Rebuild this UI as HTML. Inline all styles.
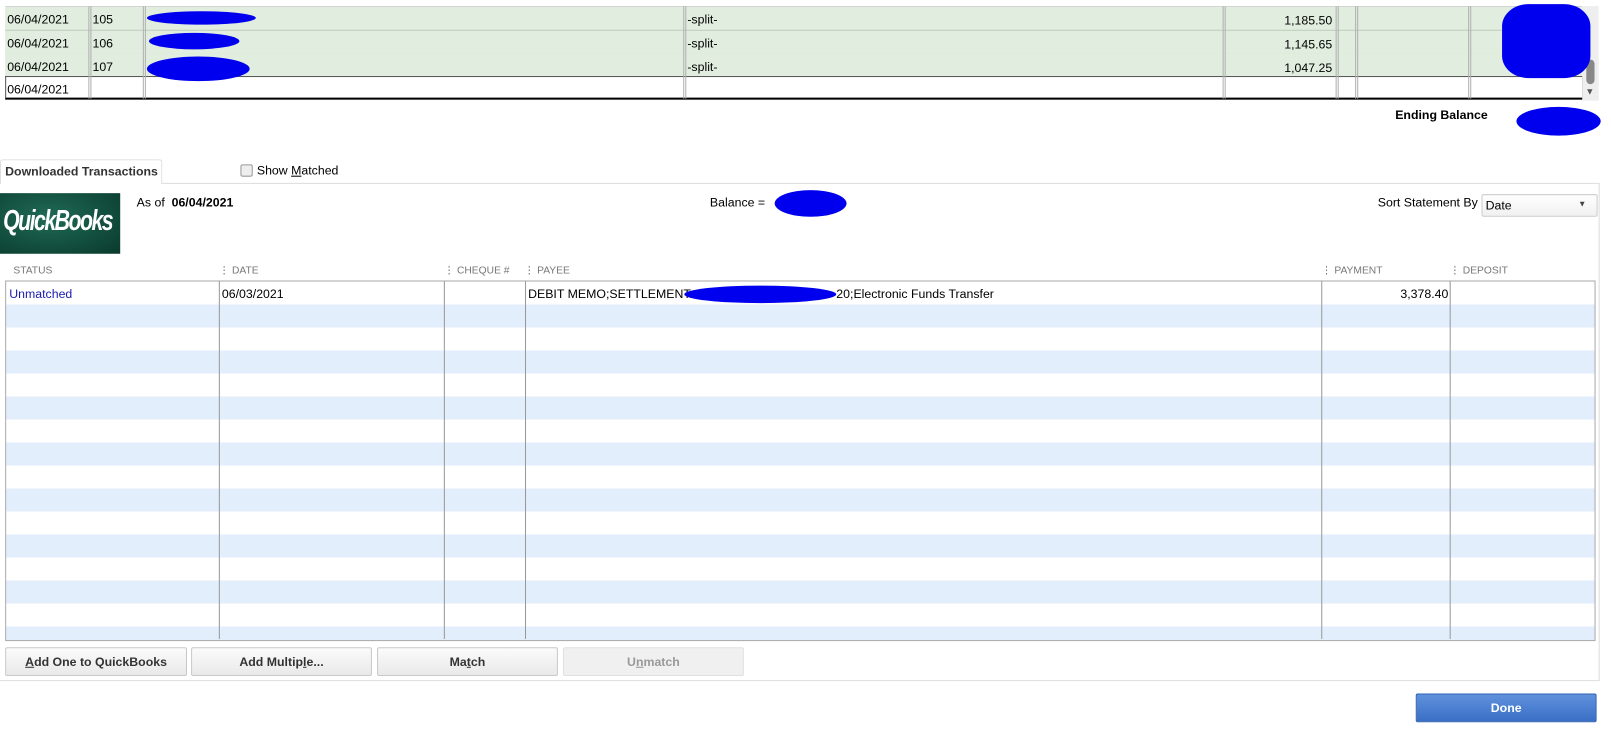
<!DOCTYPE html>
<html><head><style>
body{margin:0;width:1611px;height:729px;background:#fff;font-family:"Liberation Sans",Arial,sans-serif;font-size:12px;color:#000;position:relative;overflow:hidden}
#w{position:absolute;left:0;top:0;width:1568px;height:710px;transform:scale(1.0274);transform-origin:0 0}
.a{position:absolute}
.tr{position:absolute;left:5px;width:1535px;height:22px;background:#e1eedf;border-bottom:1px solid #b8c8b6}
.vl{position:absolute;width:1px;background:#b0b0b0}
.t{position:absolute;white-space:nowrap}
.hd{position:absolute;top:258px;font-size:10px;color:#777}
.btn{position:absolute;top:630px;height:26px;border:1px solid #c8c8c8;border-radius:2px;background:linear-gradient(#fbfbfb,#e9e9e9);font-weight:bold;font-size:12px;color:#333;text-align:center;line-height:26px}
.blob{position:absolute;background:#0000ee;border-radius:50%}
</style></head><body><div id="w">
<div class="a" style="left:5px;top:6px;width:1535px;height:90px;border-top:1px solid #ccc"></div>
<div class="tr" style="top:7px"></div>
<div class="tr" style="top:30px"></div>
<div class="tr" style="top:52px"></div>
<div class="a" style="left:5px;top:74px;width:1534px;height:20px;border:1px solid #555;border-bottom:2px solid #000;background:#fff"></div>
<div class="vl" style="left:86px;top:6px;height:90px"></div><div class="vl" style="left:88px;top:6px;height:90px"></div>
<div class="vl" style="left:139px;top:6px;height:90px"></div><div class="vl" style="left:141px;top:6px;height:90px"></div>
<div class="vl" style="left:665px;top:6px;height:90px"></div><div class="vl" style="left:667px;top:6px;height:90px"></div>
<div class="vl" style="left:1190px;top:6px;height:90px"></div><div class="vl" style="left:1192px;top:6px;height:90px"></div>
<div class="vl" style="left:1300px;top:6px;height:90px"></div><div class="vl" style="left:1302px;top:6px;height:90px"></div>
<div class="vl" style="left:1319px;top:6px;height:90px"></div><div class="vl" style="left:1321px;top:6px;height:90px"></div>
<div class="vl" style="left:1429px;top:6px;height:90px"></div><div class="vl" style="left:1431px;top:6px;height:90px"></div>
<div class="t" style="left:7px;top:12px">06/04/2021</div><div class="t" style="left:90px;top:12px">105</div><div class="t" style="left:669px;top:12px">-split-</div><div class="t" style="left:1250px;top:13px">1,185.50</div>
<div class="t" style="left:7px;top:35px">06/04/2021</div><div class="t" style="left:90px;top:35px">106</div><div class="t" style="left:669px;top:35px">-split-</div><div class="t" style="left:1250px;top:36px">1,145.65</div>
<div class="t" style="left:7px;top:58px">06/04/2021</div><div class="t" style="left:90px;top:58px">107</div><div class="t" style="left:669px;top:58px">-split-</div><div class="t" style="left:1250px;top:59px">1,047.25</div>
<div class="t" style="left:7px;top:80px">06/04/2021</div>
<div class="a" style="left:1540px;top:6px;width:16px;height:92px;background:#eee"></div>
<div class="a" style="left:1544px;top:58px;width:8px;height:24px;background:#888;border-radius:4px"></div>
<div class="t" style="left:1543px;top:84px;font-size:9px;color:#555">▼</div>
<div class="blob" style="left:143px;top:11px;width:106px;height:13px"></div>
<div class="blob" style="left:145px;top:32px;width:88px;height:16px"></div>
<div class="blob" style="left:143px;top:55px;width:100px;height:24px"></div>
<div class="blob" style="left:1462px;top:4px;width:86px;height:72px;border-radius:30%"></div>
<div class="t" style="left:1358px;top:105px;font-weight:bold">Ending Balance</div>
<div class="blob" style="left:1476px;top:104px;width:82px;height:28px"></div>
<div class="a" style="left:0;top:155px;width:156px;height:23px;border:1px solid #ddd;border-bottom:none;border-radius:3px 3px 0 0;background:#fff"></div>
<div class="t" style="left:5px;top:160px;font-weight:bold;color:#333">Downloaded Transactions</div>
<div class="a" style="left:157px;top:178px;width:1399px;height:1px;background:#ddd"></div>
<div class="a" style="left:1556px;top:178px;width:1px;height:484px;background:#ddd"></div>
<div class="a" style="left:234px;top:160px;width:10px;height:10px;border:1px solid #999;border-radius:2px;background:#eee"></div>
<div class="t" style="left:250px;top:159px">Show <u>M</u>atched</div>
<div class="a" style="left:0;top:188px;width:117px;height:59px;background:radial-gradient(ellipse at 40% 40%,#1f6a55,#0a3a2c);overflow:hidden"></div>
<div class="t" style="left:3px;top:199px;font-size:28px;font-weight:bold;color:#fff;letter-spacing:-2px;transform:scaleX(0.74);transform-origin:left;font-style:italic">QuickBooks</div>
<div class="t" style="left:133px;top:190px">As of &nbsp;<b>06/04/2021</b></div>
<div class="t" style="left:691px;top:190px">Balance =</div>
<div class="blob" style="left:754px;top:185px;width:70px;height:26px"></div>
<div class="t" style="left:1341px;top:190px">Sort Statement By</div>
<div class="a" style="left:1442px;top:189px;width:111px;height:20px;border:1px solid #ccc;border-radius:2px;background:linear-gradient(#fff,#f0f0f0)"></div>
<div class="t" style="left:1446px;top:193px">Date</div>
<div class="t" style="left:1536px;top:194px;font-size:8px;color:#444">▼</div>
<div class="hd" style="left:13px">STATUS</div>
<div class="hd" style="left:213px">⋮ DATE</div>
<div class="hd" style="left:432px">⋮ CHEQUE #</div>
<div class="hd" style="left:510px">⋮ PAYEE</div>
<div class="hd" style="left:1286px">⋮ PAYMENT</div>
<div class="hd" style="left:1411px">⋮ DEPOSIT</div>
<div class="a" style="left:5px;top:273px;width:1546px;height:349px;border:1px solid #aaa;background:repeating-linear-gradient(#fff 0 22.4px,#e3eefc 22.4px 44.8px)"></div>
<div class="vl" style="left:213px;top:274px;height:348px;background:#999"></div>
<div class="vl" style="left:432px;top:274px;height:348px;background:#999"></div>
<div class="vl" style="left:511px;top:274px;height:348px;background:#999"></div>
<div class="vl" style="left:1286px;top:274px;height:348px;background:#999"></div>
<div class="vl" style="left:1411px;top:274px;height:348px;background:#999"></div>
<div class="t" style="left:9px;top:279px;color:#1a1ab0">Unmatched</div>
<div class="t" style="left:216px;top:279px">06/03/2021</div>
<div class="t" style="left:514px;top:279px">DEBIT MEMO;SETTLEMENT:</div>
<div class="t" style="left:814px;top:279px">20;Electronic Funds Transfer</div>
<div class="blob" style="left:666px;top:278px;width:148px;height:17px"></div>
<div class="t" style="left:1363px;top:279px">3,378.40</div>
<div class="btn" style="left:5px;width:175px"><u>A</u>dd One to QuickBooks</div>
<div class="btn" style="left:186px;width:174px">Add Multip<u>l</u>e...</div>
<div class="btn" style="left:367px;width:174px">Ma<u>t</u>ch</div>
<div class="btn" style="left:548px;width:174px;color:#999;background:#f0f0f0;border-color:#e0e0e0">U<u>n</u>match</div>
<div class="a" style="left:0;top:662px;width:1557px;height:1px;background:#ddd"></div>
<div class="a" style="left:1378px;top:675px;width:174px;height:26px;border:1px solid #2a5fb0;border-radius:2px;background:linear-gradient(#5f91dc,#3a6fc6);color:#fff;font-weight:bold;text-align:center;line-height:26px">Done</div>
</div></body></html>
